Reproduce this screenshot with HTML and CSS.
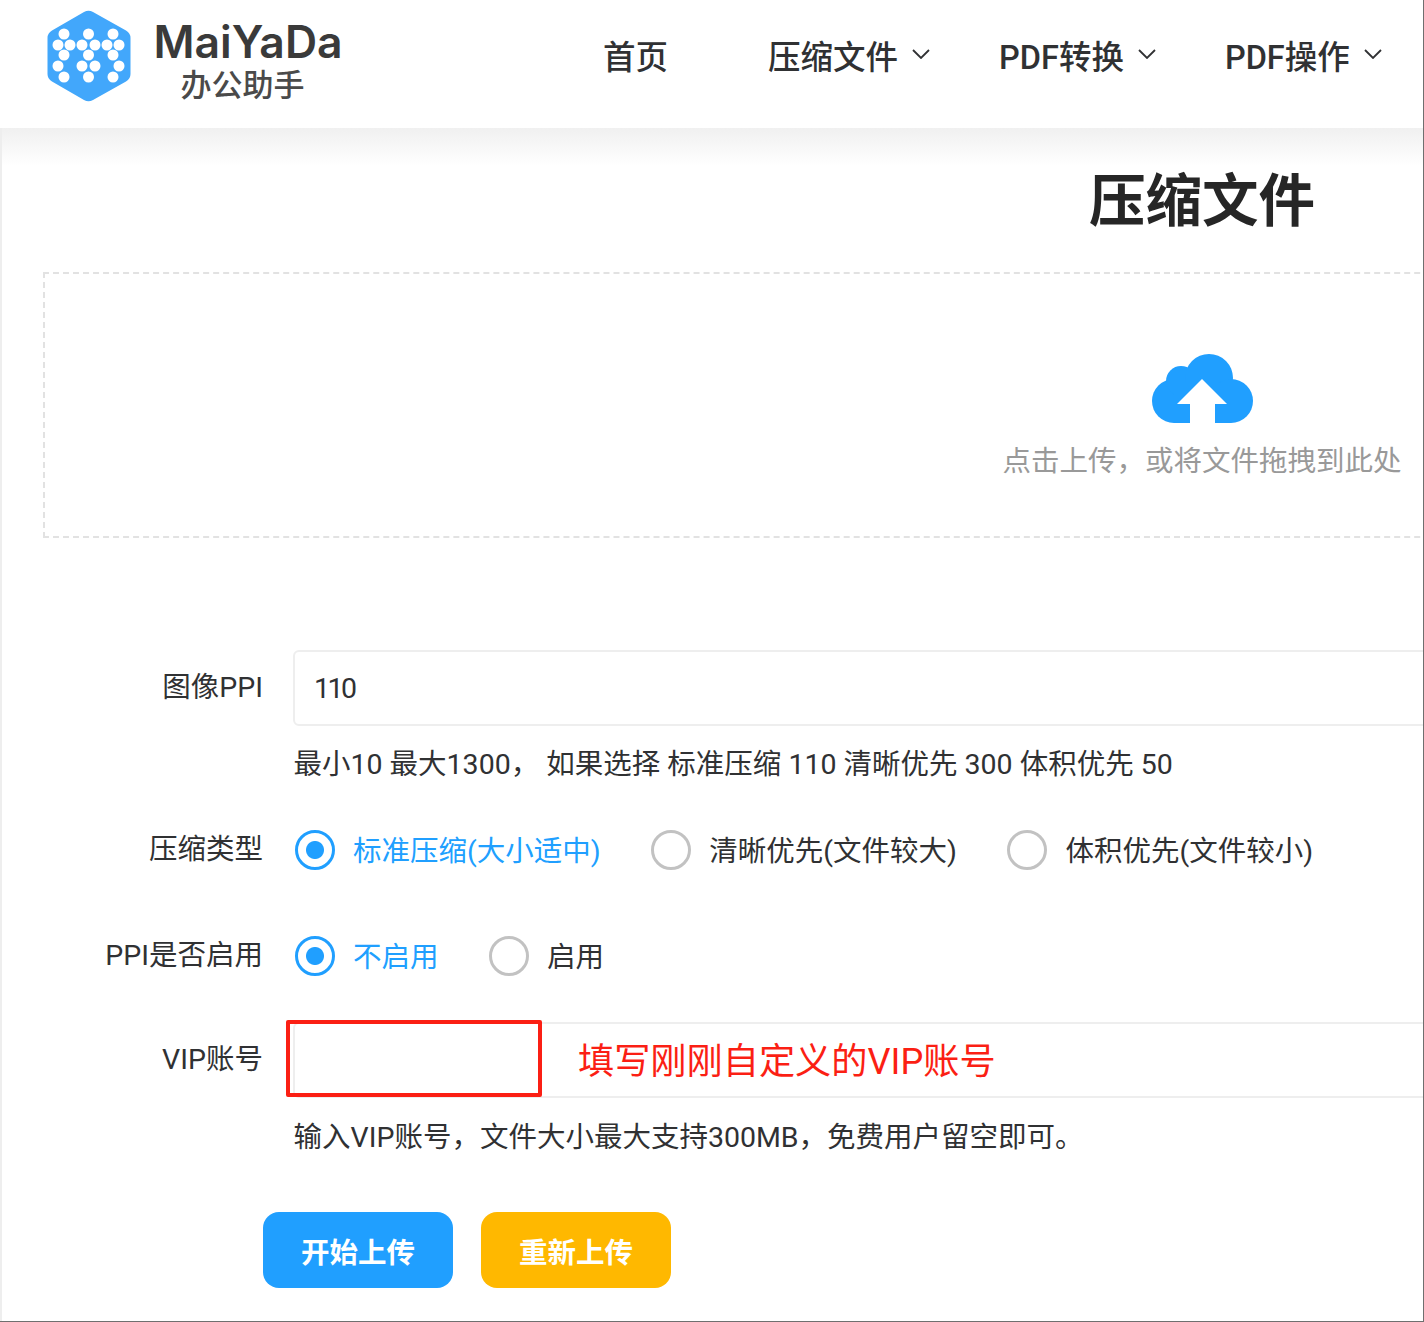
FILE: index.html
```html
<!DOCTYPE html>
<html lang="zh-CN">
<head>
    <meta charset="UTF-8">
    <meta name="viewport" content="width=device-width, initial-scale=1.0">
    <title>压缩文件 - MaiYaDa办公助手</title>
    <link rel="stylesheet" href="styles.css">
</head>
<body>
<div class="page">
    <header class="header">
        <a class="logo" href="#">
            <svg class="logo-mark" width="84" height="92" viewBox="0 0 84 92">
                <path d="M37 2 Q41.500 -0.500 46 2 L79 20.500 Q83.500 23 83.500 28 L83.500 64 Q83.500 69 79 71.500 L46 90 Q41.500 92.500 37 90 L5 71.500 Q0.500 69 0.500 64 L0.500 28 Q0.500 23 5 20.500 Z" fill="#42a7fb"/>
                <g fill="#fff">
                    <circle cx="17" cy="24" r="5.500"/><circle cx="41.500" cy="24" r="5.500"/><circle cx="66" cy="24" r="5.500"/>
                    <circle cx="11" cy="35" r="5.500"/><circle cx="23" cy="35" r="5.500"/><circle cx="35" cy="35" r="5.500"/><circle cx="48" cy="35" r="5.500"/><circle cx="60" cy="35" r="5.500"/><circle cx="72" cy="35" r="5.500"/>
                    <circle cx="17" cy="45" r="5.500"/><circle cx="41.500" cy="45" r="5.500"/><circle cx="66" cy="45" r="5.500"/>
                    <circle cx="11" cy="56" r="5.500"/><circle cx="35" cy="56" r="5.500"/><circle cx="48" cy="56" r="5.500"/><circle cx="72" cy="56" r="5.500"/>
                    <circle cx="17" cy="67" r="5.500"/><circle cx="41.500" cy="67" r="5.500"/><circle cx="66" cy="67" r="5.500"/>
                </g>
            </svg>
            <div class="logo-text">
                <div class="logo-name">MaiYaDa</div>
                <div class="logo-sub">办公助手</div>
            </div>
        </a>
        <nav class="nav">
            <a class="nav-home" href="#">首页</a>
            <a class="nav-zip" href="#">压缩文件<svg class="chevron" width="18" height="10" viewBox="0 0 18 10"><path d="M1 1 L9 9 L17 1"/></svg></a>
            <a class="nav-conv" href="#">PDF转换<svg class="chevron" width="18" height="10" viewBox="0 0 18 10"><path d="M1 1 L9 9 L17 1"/></svg></a>
            <a class="nav-ops" href="#">PDF操作<svg class="chevron" width="18" height="10" viewBox="0 0 18 10"><path d="M1 1 L9 9 L17 1"/></svg></a>
        </nav>
    </header>

    <main class="main">
        <h1 class="title">压缩文件</h1>

        <div class="upload">
            <svg class="cloud" width="101" height="69" viewBox="0 0 101 69">
                <g fill="#209fff">
                    <circle cx="22" cy="47" r="22"/>
                    <circle cx="29" cy="27" r="15"/>
                    <circle cx="57" cy="24" r="24"/>
                    <circle cx="79" cy="47" r="22"/>
                    <rect x="22" y="30" width="57" height="39"/>
                </g>
                <path d="M50 25 L75 50 L63 50 L63 69 L38 69 L38 50 L25 50 Z" fill="#fff"/>
            </svg>
            <div class="upload-text">点击上传，或将文件拖拽到此处</div>
        </div>

        <form class="form">
            <div class="form-row row-ppi">
                <label class="form-label">图像PPI</label>
                <input class="text-input" type="text" value="110">
            </div>
            <div class="hint">最小10 最大1300， 如果选择 标准压缩 110 清晰优先 300 体积优先 50</div>

            <div class="form-row row-type">
                <label class="form-label">压缩类型</label>
                <div class="radios">
                    <span class="radio checked"><i></i>标准压缩(大小适中)</span>
                    <span class="radio"><i></i>清晰优先(文件较大)</span>
                    <span class="radio"><i></i>体积优先(文件较小)</span>
                </div>
            </div>

            <div class="form-row row-enable">
                <label class="form-label">PPI是否启用</label>
                <div class="radios">
                    <span class="radio checked"><i></i>不启用</span>
                    <span class="radio"><i></i>启用</span>
                </div>
            </div>

            <div class="form-row row-vip">
                <label class="form-label">VIP账号</label>
                <input class="text-input" type="text">
                <div class="mark-box"></div>
                <div class="mark-text">填写刚刚自定义的VIP账号</div>
            </div>
            <div class="hint">输入VIP账号，文件大小最大支持300MB，免费用户留空即可。</div>

            <div class="buttons">
                <button type="button" class="btn btn-blue">开始上传</button>
                <button type="button" class="btn btn-yellow">重新上传</button>
            </div>
        </form>
    </main>
</div>
</body>
</html>
```

FILE: styles.css
```css
* {
    box-sizing: border-box;
}
html, body {
    margin: 0;
    padding: 0;
}
body {
    font-family: Roboto, "Noto Sans CJK SC", sans-serif;
    color: #303133;
    background: #fff;
}
a {
    color: inherit;
    text-decoration: none;
}
.page {
    width: 1424px;
    height: 1322px;
    overflow: hidden;
    border-right: 1px solid #6f6f6f;
    border-bottom: 1px solid #6f6f6f;
}

/* header */
.header {
    display: flex;
    align-items: flex-start;
    height: 128px;
    background: #fff;
}
.logo {
    display: flex;
    margin: 10px 0 0 47px;
}
.logo-text {
    margin-left: 16px;
    width: 196px;
    text-align: center;
    color: #3a3a3a;
}
.logo-name {
    padding-left: 6px;
    font-family: "Inter", sans-serif;
    font-size: 44.500px;
    font-weight: 600;
    line-height: 44px;
    margin-top: 10px;
    white-space: nowrap;
}
.logo-sub {
    padding-right: 5px;
    font-family: "Noto Sans CJK SC", sans-serif;
    font-size: 31px;
    line-height: 38px;
    font-weight: 500;
    color: #4a4a4a;
}
.nav {
    display: flex;
    align-items: center;
    height: 108px;
    font-size: 32.500px;
    font-weight: 500;
}
.nav a {
    display: flex;
    align-items: center;
    white-space: nowrap;
}
.nav-home {
    margin-left: 260px;
}
.nav-zip {
    margin-left: 100px;
}
.nav-conv {
    margin-left: 69px;
}
.nav-ops {
    margin-left: 69px;
}
.chevron {
    margin-left: 14px;
    fill: none;
    stroke: #303133;
    stroke-width: 1.800;
}

/* main */
.main {
    width: 2400px;
    height: 1193px;
    padding-left: 41px;
    border-left: 2px solid #eee;
    background: linear-gradient(#f0f0f0, #fff 38px);
}
.title {
    width: 2318px;
    margin: 0;
    padding-top: 32px;
    font-size: 56.500px;
    line-height: 84px;
    font-weight: 700;
    text-align: center;
    color: #262626;
}
.upload {
    width: 2318px;
    height: 266px;
    margin-top: 28px;
    padding-top: 80px;
    border: 2px dashed #e2e2e2;
    text-align: center;
}
.cloud {
    display: block;
    margin: 0 auto;
}
.upload-text {
    margin-top: 18px;
    font-size: 28.500px;
    line-height: 42px;
    color: #999;
}

/* form */
.form {
    margin-top: 112px;
}
.form-row {
    display: flex;
    align-items: center;
    position: relative;
}
.form-label {
    flex: none;
    width: 220px;
    font-size: 28.500px;
    line-height: 32px;
    text-align: right;
}
.text-input {
    flex: none;
    width: 2000px;
    height: 76px;
    margin-left: 30px;
    padding: 0 19px;
    border: 2px solid #eee;
    border-radius: 6px;
    font-family: inherit;
    font-size: 28.500px;
    letter-spacing: -2.500px;
    color: #303133;
    outline: none;
}
.hint {
    height: 40px;
    margin: 19px 0 0 250.500px;
    font-size: 28.500px;
    line-height: 40px;
    white-space: nowrap;
}
.row-vip + .hint {
    margin-top: 20px;
}
.row-type {
    height: 40px;
    margin-top: 45px;
}
.row-enable {
    height: 40px;
    margin-top: 66px;
}
.row-vip {
    margin-top: 46px;
}
.radios {
    display: flex;
    margin-left: 32px;
}
.radio {
    display: flex;
    align-items: flex-start;
    height: 40px;
    margin-right: 50.500px;
    font-size: 28.500px;
    line-height: 43px;
    white-space: nowrap;
}
.radio i {
    width: 40px;
    height: 40px;
    margin-right: 18px;
    border: 3px solid #c2c2c2;
    border-radius: 50%;
    background: #fff;
}
.radio.checked {
    color: #209fff;
}
.radio.checked i {
    border-color: #209fff;
    background: radial-gradient(circle, #209fff 8.500px, #fff 9.500px);
}

/* red annotation drawn over the vip input */
.mark-box {
    position: absolute;
    left: 243px;
    top: -2px;
    width: 256px;
    height: 77px;
    border: 4px solid #fb1f14;
    border-radius: 2px;
}
.mark-text {
    position: absolute;
    left: 535px;
    top: 13px;
    font-size: 36.200px;
    line-height: 54px;
    color: #fb1f14;
    white-space: nowrap;
}

.buttons {
    display: flex;
    gap: 28px;
    margin: 54px 0 0 220px;
}
.btn {
    width: 190px;
    height: 76px;
    border: none;
    border-radius: 16px;
    font-family: inherit;
    font-size: 28.500px;
    font-weight: 700;
    color: #fff;
}
.btn-blue {
    background: #209fff;
}
.btn-yellow {
    background: #ffb800;
}
```
